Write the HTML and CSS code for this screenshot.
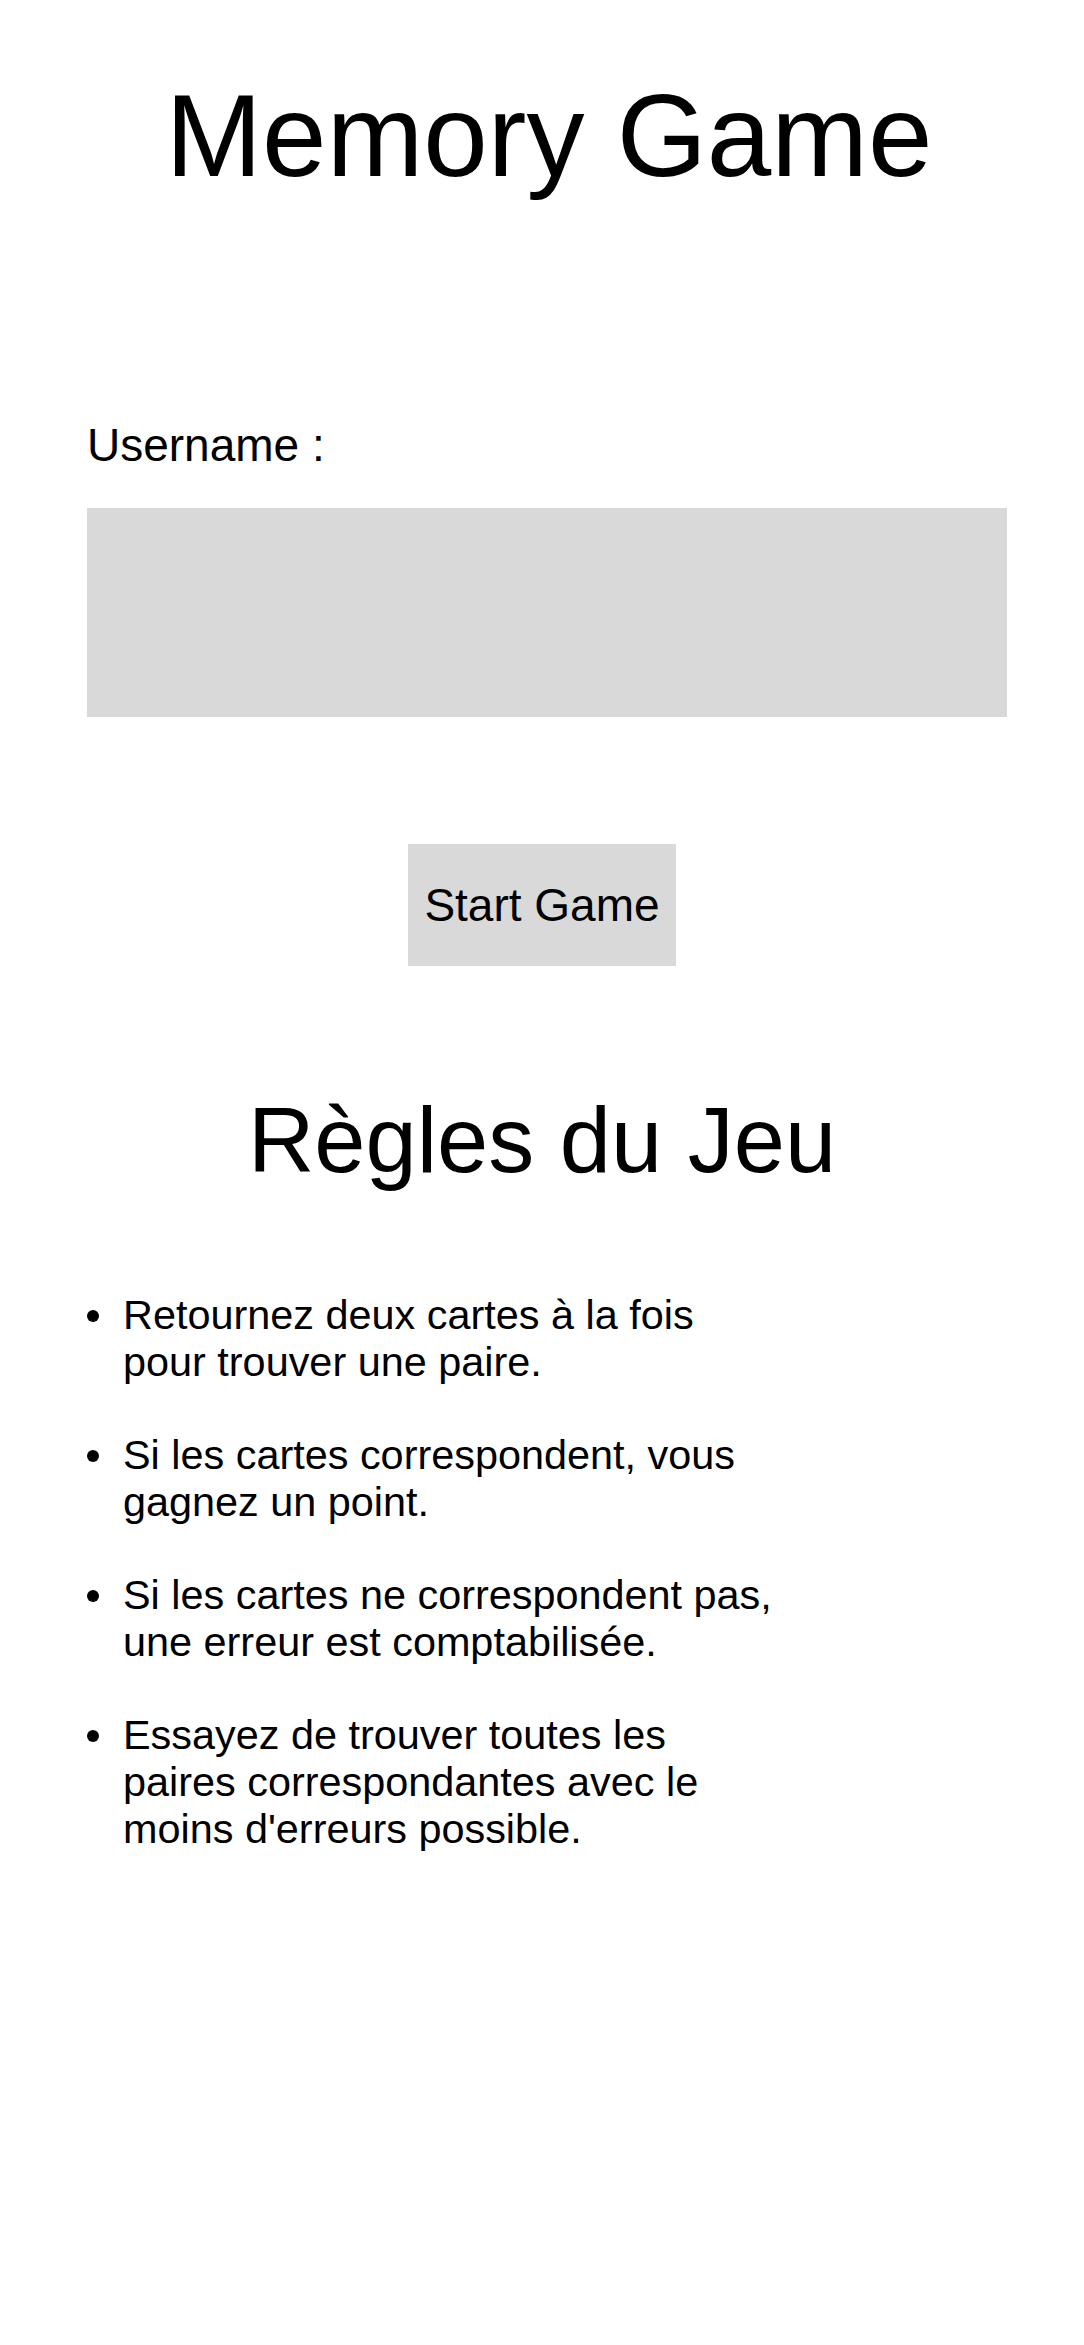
FILE: index.html
```html
<!DOCTYPE html>
<html lang="fr">
<head>
<meta charset="utf-8">
<title>Memory Game</title>
<link rel="stylesheet" href="styles.css">
</head>
<body>
<main class="page">
  <h1 class="title">Memory Game</h1>
  <section class="form">
    <label class="label" for="username">Username :</label>
    <input class="input" id="username" type="text">
  </section>
  <button class="start" type="button">Start Game</button>
  <h2 class="rules-title">Règles du Jeu</h2>
  <ul class="rules">
    <li class="rule"><span class="rule-text">Retournez deux cartes à la fois pour trouver une paire.</span></li>
    <li class="rule"><span class="rule-text">Si les cartes correspondent, vous gagnez un point.</span></li>
    <li class="rule"><span class="rule-text">Si les cartes ne correspondent pas, une erreur est comptabilisée.</span></li>
    <li class="rule"><span class="rule-text">Essayez de trouver toutes les paires correspondantes avec le moins d'erreurs possible.</span></li>
  </ul>
</main>
</body>
</html>
```

FILE: styles.css
```css
html, body {
  margin: 0;
  padding: 0;
  background: #ffffff;
}

body {
  font-family: "Liberation Sans", Arial, sans-serif;
  font-size: 46px;
  color: #000000;
}

.page {
  display: flex;
  flex-direction: column;
  min-height: 2345px;
}

.title {
  margin: 69px 0 0;
  padding-left: 14px;
  font-size: 116px;
  font-weight: 400;
  line-height: normal;
  text-align: center;
}

.form {
  display: flex;
  flex-direction: column;
  align-items: flex-start;
  padding-left: 87px;
  margin-top: 215px;
}

.label {
  display: block;
  line-height: normal;
}

.input {
  display: block;
  box-sizing: border-box;
  width: 920px;
  height: 209px;
  margin-top: 36px;
  border: none;
  background: #d9d9d9;
  font: inherit;
  padding: 0;
  outline: none;
}

.start {
  align-self: center;
  margin-top: 127px;
  padding: 34px 16.5px;
  border: none;
  background: #d9d9d9;
  color: #000;
  font-family: inherit;
  font-size: 46px;
  line-height: normal;
}

.rules-title {
  margin: 122px 0 0;
  font-size: 92px;
  font-weight: 400;
  line-height: normal;
  text-align: center;
}

.rules {
  list-style: none;
  margin: 99px 0 0;
  padding: 0 0 0 87px;
}

.rule {
  display: grid;
  grid-template-columns: 36px 655px;
  font-size: 41.4px;
  line-height: normal;
  margin-bottom: 46px;
}

.rule::before {
  content: "";
  width: 12px;
  height: 12px;
  border-radius: 50%;
  background: #000;
  margin-top: 18px;
}
```
